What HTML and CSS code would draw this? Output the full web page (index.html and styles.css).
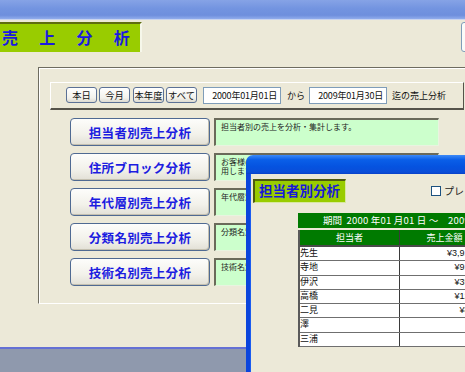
FILE: index.html
```html
<!DOCTYPE html>
<html lang="ja">
<head>
<meta charset="utf-8">
<link rel="stylesheet" href="styles.css">
</head>
<body>
<div class="app">
  <div class="titlebar"></div>
  <div class="main">
    <div class="header">
      <div class="title">売 上 分 析</div>
      <div class="hbtn"></div>
    </div>
    <div class="panel">
      <div class="daterow">
        <button class="sbtn">本日</button>
        <button class="sbtn">今月</button>
        <button class="sbtn">本年度</button>
        <button class="sbtn">すべて</button>
        <div class="dbox first">2000年01月01日</div>
        <span class="lbl kara">から</span>
        <div class="dbox">2009年01月30日</div>
        <span class="lbl">迄の売上分析</span>
      </div>
      <div class="rows">
        <div class="row"><button class="big">担当者別売上分析</button><div class="desc">担当者別の売上を分析・集計します。</div></div>
        <div class="row"><button class="big">住所ブロック分析</button><div class="desc">お客様の住所ブロック別に売上を分析・集計する際に利<br>用します。</div></div>
        <div class="row"><button class="big">年代層別売上分析</button><div class="desc">年代層別の売上を分析・集計します。</div></div>
        <div class="row"><button class="big">分類名別売上分析</button><div class="desc">分類名別の売上を分析・集計します。</div></div>
        <div class="row"><button class="big">技術名別売上分析</button><div class="desc">技術名別の売上を分析・集計します。</div></div>
      </div>
    </div>
  </div>
  <div class="desktop"></div>

  <div class="subwin">
    <div class="subbar"></div>
    <div class="subbody">
      <div class="subhead">
        <div class="sublabel">担当者別分析</div>
        <label class="chk"><span class="box"></span>プレビュー</label>
      </div>
      <div class="period"><span class="pk">期間</span><span class="pv">2000 年01 月01 日 ～　2009 年01 月30 日</span></div>
      <div class="tbl">
        <div class="tr th"><div class="c1">担当者</div><div class="c2">売上金額</div></div>
        <div class="tr"><div class="c1">先生</div><div class="c2">¥3,912,400</div></div>
        <div class="tr"><div class="c1">寺地</div><div class="c2">¥912,300</div></div>
        <div class="tr"><div class="c1">伊沢</div><div class="c2">¥351,700</div></div>
        <div class="tr"><div class="c1">高橋</div><div class="c2">¥128,900</div></div>
        <div class="tr"><div class="c1">二見</div><div class="c2">¥86,400</div></div>
        <div class="tr"><div class="c1">澤</div><div class="c2"></div></div>
        <div class="tr"><div class="c1">三浦</div><div class="c2"></div></div>
      </div>
    </div>
  </div>
</div>
</body>
</html>
```

FILE: styles.css
```css
* { box-sizing: border-box; }
html, body { margin: 0; padding: 0; }
body {
  width: 465px;
  height: 372px;
  overflow: hidden;
  background: #ece9d8;
  font-family: "Noto Sans CJK JP", "Liberation Sans", sans-serif;
}
.app {
  position: relative;
  width: 465px;
  height: 372px;
  overflow: hidden;
  display: flex;
  flex-direction: column;
}
.titlebar {
  height: 20px;
  flex: none;
  background: linear-gradient(#86a3e6, #7394e0 45%, #6e8fdd 80%, #91acec);
  border-bottom: 1px solid #c9d4ef;
}
.main {
  height: 327px;
  flex: none;
  background: #ece9d8;
  width: 520px;
}
.header {
  display: flex;
  align-items: flex-start;
  padding-top: 2px;
  height: 32px;
}
.title {
  width: 142px;
  height: 30px;
  background: #99cc00;
  border-top: 2px solid #5f6d10;
  border-right: 2px solid #f6f7ea;
  color: #1a1ae0;
  font-weight: bold;
  font-size: 16px;
  line-height: 26px;
  letter-spacing: 8.8px;
  padding-left: 2px;
  white-space: pre;
}
.hbtn {
  margin-left: 319px;
  width: 40px;
  height: 30px;
  background: #fbfbf8;
  border: 1px solid #7f9db9;
  border-radius: 3px;
}
.panel {
  margin-top: 15px;
  margin-left: 38px;
  width: 460px;
  height: 237px;
  border-top: 1px solid #6e6c60;
  border-left: 1px solid #6e6c60;
  border-bottom: 1px solid #ffffff;
  box-shadow: inset 1px 1px 0 #ffffff;
}
.daterow {
  margin-top: 14px;
  margin-left: 11px;
  width: 414px;
  height: 28px;
  border-top: 1px solid #ffffff;
  border-left: 1px solid #ffffff;
  border-right: 1px solid #55534a;
  border-bottom: 2px solid #55534a;
  display: flex;
  align-items: center;
  padding-left: 15px;
  padding-bottom: 1px;
}
.sbtn {
  font-family: "Noto Sans CJK JP", sans-serif;
  font-size: 9.3px;
  width: 31px;
  height: 16px;
  padding: 0;
  margin-right: 2px;
  color: #111;
  background: linear-gradient(#ffffff, #f3f2ec 70%, #dcdad0);
  border: 1px solid #5b7196;
  border-radius: 3px;
  line-height: 13px;
}
.sbtn:nth-child(3) { margin-left: 1px; }
.dbox {
  width: 78px;
  height: 17px;
  background: #ffffff;
  border: 1px solid #7f9db9;
  font-size: 9px;
  line-height: 15px;
  text-align: right;
  padding-right: 3px;
  color: #111;
  margin-left: 4px;
  letter-spacing: -0.2px;
}
.dbox.first { margin-left: 4px; }
.lbl {
  font-size: 9px;
  color: #111;
  margin-left: 5px;
}
.lbl.kara { margin-left: 6px; margin-right: 0; }
.rows {
  margin-top: 8px;
  margin-left: 31px;
  display: flex;
  flex-direction: column;
  gap: 7px;
}
.row {
  display: flex;
  gap: 4px;
  height: 28px;
}
.big {
  width: 140px;
  height: 28px;
  padding: 0;
  font-family: "Noto Sans CJK JP", sans-serif;
  font-size: 12.5px;
  font-weight: bold;
  color: #1c1ce0;
  background: linear-gradient(#fdfdfb, #f2f1ea 60%, #e2e0d6);
  border: 1px solid #4f6a92;
  border-radius: 4px;
  box-shadow: inset -1px -1px 0 #c4c0b0;
  letter-spacing: 0.3px;
}
.desc {
  width: 225px;
  height: 28px;
  background: #ccffcc;
  border-top: 2px solid #6a6a5a;
  border-left: 2px solid #6a6a5a;
  border-right: 1px solid #e8f4e0;
  border-bottom: 1px solid #e8f4e0;
  font-size: 8px;
  line-height: 8.5px;
  color: #222;
  padding: 3px 0 0 5px;
  white-space: nowrap;
  overflow: hidden;
}
.desktop {
  flex: 1;
  background: #8f99ad;
  border-top: 2px solid #6470d4;
}

/* overlay window */
.subwin {
  position: absolute;
  left: 246px;
  top: 155px;
  width: 280px;
  height: 230px;
}
.subbar {
  height: 19px;
  border-radius: 7px 7px 0 0;
  background: linear-gradient(#3d8af7, #0a5fe8 25%, #0553e0 60%, #0a4ed8 90%, #0841c8);
}
.subbody {
  height: 211px;
  background: #ece9d8;
  border-left: 4px solid #0b45dc;
  box-shadow: inset 1px 0 0 #1a5cf0;
  padding-top: 5px;
  padding-left: 3px;
}
.subhead {
  display: flex;
  align-items: flex-start;
}
.sublabel {
  width: 93px;
  height: 24px;
  background: #99cc00;
  border-top: 2px solid #4d5a10;
  border-left: 2px solid #4d5a10;
  border-right: 1px solid #d8e8a0;
  border-bottom: 1px solid #d8e8a0;
  color: #1818d8;
  font-weight: bold;
  font-size: 13.5px;
  line-height: 19px;
  padding-left: 4px;
  white-space: nowrap;
}
.chk {
  display: flex;
  align-items: center;
  margin-left: 85px;
  margin-top: 4px;
  font-size: 10px;
  color: #222;
  white-space: nowrap;
}
.box {
  width: 10px;
  height: 10px;
  background: #fff;
  border: 1px solid #1c5180;
  margin-right: 3px;
}
.period {
  margin-top: 10px;
  margin-left: 45px;
  width: 230px;
  height: 15px;
  background: #007a00;
  color: #ffffff;
  font-size: 9.5px;
  line-height: 15px;
  white-space: nowrap;
  display: flex;
}
.pk { margin-left: 25px; width: 27px; }
.pv { letter-spacing: 0.2px; }
.tbl {
  margin-top: 2px;
  margin-left: 45px;
  width: 200px;
  border-left: 2px solid #5a5a5a;
}
.tr {
  display: flex;
  height: 14.3px;
  background: #ffffff;
  border-bottom: 1px solid #6f6f6f;
  font-size: 9px;
  line-height: 12px;
  color: #111;
  overflow: hidden;
}
.tr.th {
  height: 17px;
  background: #007a00;
  color: #ffffff;
  border-bottom: 2px solid #4a4a4a;
  line-height: 15px;
}
.c1 {
  width: 100px;
  border-right: 1px solid #3a3a3a;
  white-space: nowrap;
}
.th .c1, .th .c2 { text-align: center; }
.c2 {
  width: 95px;
  text-align: right;
  white-space: nowrap;
  padding-right: 3px;
  font-family: "Liberation Sans", "Noto Sans CJK JP", sans-serif;
}
.th .c2 { font-family: "Noto Sans CJK JP", sans-serif; padding-right: 6px; }
```
